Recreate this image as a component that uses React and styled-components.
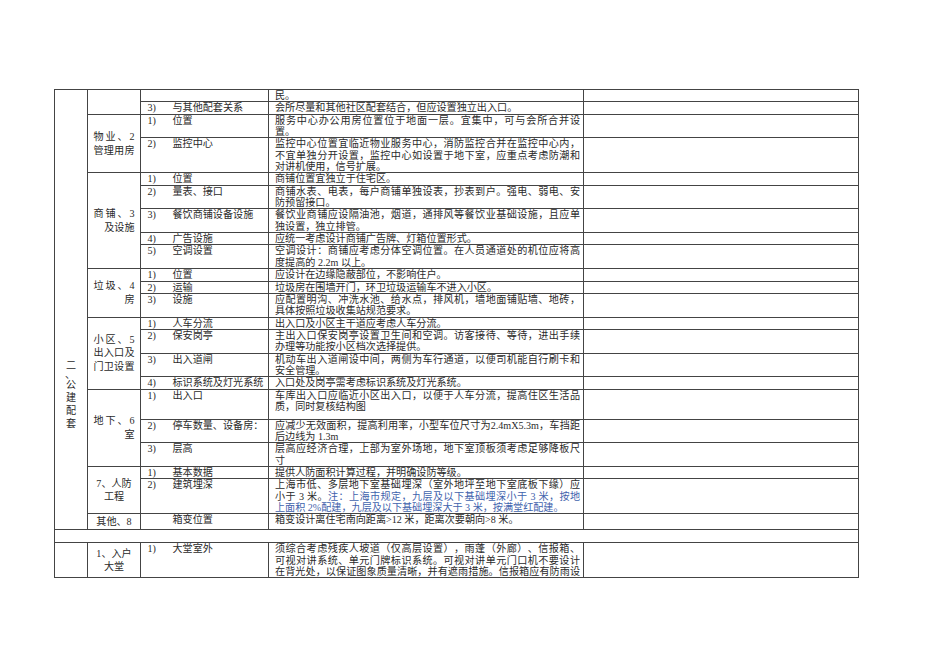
import React from 'react';
import styled, { createGlobalStyle } from 'styled-components';

const GlobalStyle = createGlobalStyle`
  html, body {
    margin: 0;
    padding: 0;
    background: #fff;
  }
  body {
    font-family: "Liberation Serif", "Noto Sans CJK SC", serif;
    color: #2a2a2a;
  }
`;

const Page = styled.div`
  width: 950px;
  height: 672px;
  box-sizing: border-box;
  padding: 89px 0 0 54px;
  overflow: hidden;
`;

const Table = styled.table`
  border-collapse: collapse;
  table-layout: fixed;
  width: 804px;
  font-size: 10.1px;
  line-height: 11.35px;
  text-spacing-trim: space-all;
`;

const Col = styled.col`
  width: ${p => p.$w}px;
`;

const Row = styled.tr`
  height: ${p => (p.$h ? `${p.$h}px` : 'auto')};
`;

const Cell = styled.td`
  border: 1px solid #444;
  padding: 0;
  vertical-align: top;
`;

const SectionCell = styled(Cell)`
  padding-top: 269px;
  text-align: center;
`;

const Glyph = styled.span`
  display: block;
  height: ${p => (p.$short ? 6 : 13)}px;
  line-height: ${p => (p.$short ? 6 : 13)}px;
  text-indent: ${p => (p.$short ? '-2px' : '0')};
`;

const GroupCell = styled(Cell)`
  vertical-align: middle;
  padding: 0 5.5px;
  line-height: 13.5px;
`;

const LabelLine = styled.span`
  display: block;
  white-space: nowrap;
  text-align: ${p => p.$align};
  text-align-last: ${p => p.$align};
`;

const ItemCell = styled(Cell)`
  padding-left: 6.5px;
`;

const Item = styled.div`
  display: flex;
`;

const Num = styled.span`
  width: 25px;
  flex: none;
`;

const Name = styled.span`
  white-space: nowrap;
`;

const TextCell = styled(Cell)`
  padding: 0 3px 0 6px;
`;

const TextLine = styled.span`
  display: block;
  text-align: justify;
  text-align-last: ${p => (p.$full ? 'justify' : 'left')};
`;

const Note = styled.span`
  color: #3f63ad;
`;

const groups = [
  {
    label: [],
    items: [
      { num: '', name: '', text: ['民。'] },
      { num: '3)', name: '与其他配套关系', text: ['会所尽量和其他社区配套结合，但应设置独立出入口。'] },
    ],
  },
  {
    label: [['物业、2', 'justify'], ['管理用房', 'justify']],
    items: [
      { num: '1)', name: '位置', text: ['服务中心办公用房位置位于地面一层。宜集中，可与会所合并设', '置。'] },
      {
        num: '2)',
        name: '监控中心',
        text: [
          '监控中心位置宜临近物业服务中心，消防监控合并在监控中心内，',
          '不宜单独分开设置，监控中心如设置于地下室，应重点考虑防潮和',
          '对讲机使用，信号扩展。',
        ],
      },
    ],
  },
  {
    label: [['商铺、3', 'justify'], ['及设施', 'right']],
    items: [
      { num: '1)', name: '位置', text: ['商铺位置宜独立于住宅区。'] },
      { num: '2)', name: '量表、接口', text: ['商铺水表、电表，每户商铺单独设表，抄表到户。强电、弱电、安', '防预留接口。'] },
      { num: '3)', name: '餐饮商铺设备设施', text: ['餐饮业商铺应设隔油池，烟道，通排风等餐饮业基础设施，且应单', '独设置，独立排管。'] },
      { num: '4)', name: '广告设施', text: ['应统一考虑设计商铺广告牌、灯箱位置形式。'] },
      { num: '5)', name: '空调设置', text: ['空调设计：商铺应考虑分体空调位置。在人员通道处的机位应将高', '度提高的 2.2m 以上。'] },
    ],
  },
  {
    label: [['垃圾、4', 'justify'], ['房', 'right']],
    items: [
      { num: '1)', name: '位置', text: ['应设计在边缘隐蔽部位，不影响住户。'] },
      { num: '2)', name: '运输', text: ['垃圾房在围墙开门，环卫垃圾运输车不进入小区。'] },
      { num: '3)', name: '设施', text: ['应配置明沟、冲洗水池、给水点，排风机，墙地面铺贴墙、地砖，', '具体按照垃圾收集站规范要求。'] },
    ],
  },
  {
    label: [['小区、5', 'justify'], ['出入口及', 'justify'], ['门卫设置', 'justify']],
    items: [
      { num: '1)', name: '人车分流', text: ['出入口及小区主干道应考虑人车分流。'] },
      { num: '2)', name: '保安岗亭', text: ['主出入口保安岗亭设置卫生间和空调。访客接待、等待，进出手续', '办理等功能按小区档次选择提供。'] },
      { num: '3)', name: '出入道闸', text: ['机动车出入道闸设中间，两侧为车行通道，以便司机能自行刷卡和', '安全管理。'] },
      { num: '4)', name: '标识系统及灯光系统', text: ['入口处及岗亭需考虑标识系统及灯光系统。'] },
    ],
  },
  {
    label: [['地下、6', 'justify'], ['室', 'right']],
    items: [
      { num: '1)', name: '出入口', h: 30, text: ['车库出入口应临近小区出入口，以便于人车分流，提高住区生活品', '质，同时复核结构图'] },
      { num: '2)', name: '停车数量、设备房：', text: ['应减少无效面积，提高利用率，小型车位尺寸为2.4mX5.3m，车挡距', '后边线为 1.3m'] },
      { num: '3)', name: '层高', text: ['层高应经济合理，上部为室外场地，地下室顶板须考虑足够降板尺', '寸'] },
    ],
  },
  {
    label: [['7、人防', 'center'], ['工程', 'center']],
    items: [
      { num: '1)', name: '基本数据', text: ['提供人防面积计算过程，并明确设防等级。'] },
      {
        num: '2)',
        name: '建筑埋深',
        text: [
          '上海市低、多层地下室基础埋深（室外地坪至地下室底板下缘）应',
          ['小于 3 米。', { note: '注：上海市规定，九层及以下基础埋深小于 3 米，按地' }],
          [{ note: '上面积 2%配建，九层及以下基础埋深大于 3 米，按满堂红配建。' }],
        ],
      },
    ],
  },
  {
    label: [['其他、8', 'center']],
    items: [
      { num: '', name: '箱变位置', h: 16, text: ['箱变设计离住宅南向距离>12 米，距离次要朝向>8 米。'] },
    ],
  },
];

const totalRows = groups.reduce((n, g) => n + g.items.length, 0);

const renderLine = line => {
  if (typeof line === 'string') return line;
  return line.map((seg, i) =>
    typeof seg === 'string' ? <React.Fragment key={i}>{seg}</React.Fragment> : <Note key={i}>{seg.note}</Note>
  );
};

const TextBlock = ({ lines, allFull }) => (
  <>
    {lines.map((line, i) => (
      <TextLine key={i} $full={allFull || i < lines.length - 1}>
        {renderLine(line)}
      </TextLine>
    ))}
  </>
);

const Label = ({ lines }) => (
  <>
    {lines.map(([t, align], i) => (
      <LabelLine key={i} $align={align}>
        {t}
      </LabelLine>
    ))}
  </>
);

export default function App() {
  return (
    <Page>
      <GlobalStyle />
      <Table>
        <colgroup>
          <Col $w={33} />
          <Col $w={53} />
          <Col $w={128} />
          <Col $w={315} />
          <Col $w={275} />
        </colgroup>
        <tbody>
          {groups.map((g, gi) =>
            g.items.map((it, ii) => (
              <Row key={`${gi}-${ii}`} $h={it.h}>
                {gi === 0 && ii === 0 && (
                  <SectionCell rowSpan={totalRows}>
                    <Glyph>二</Glyph>
                    <Glyph $short>、</Glyph>
                    <Glyph>公</Glyph>
                    <Glyph>建</Glyph>
                    <Glyph>配</Glyph>
                    <Glyph>套</Glyph>
                  </SectionCell>
                )}
                {ii === 0 && (
                  <GroupCell rowSpan={g.items.length}>
                    <Label lines={g.label} />
                  </GroupCell>
                )}
                <ItemCell>
                  <Item>
                    <Num>{it.num}</Num>
                    <Name>{it.name}</Name>
                  </Item>
                </ItemCell>
                <TextCell>
                  <TextBlock lines={it.text} />
                </TextCell>
                <Cell />
              </Row>
            ))
          )}
          <Row $h={13}>
            <Cell colSpan={5} />
          </Row>
          <Row>
            <Cell />
            <GroupCell>
              <Label lines={[['1、入户', 'center'], ['大堂', 'center']]} />
            </GroupCell>
            <ItemCell>
              <Item>
                <Num>1)</Num>
                <Name>大堂室外</Name>
              </Item>
            </ItemCell>
            <TextCell>
              <TextBlock
                allFull
                lines={[
                  '须综合考虑残疾人坡道（仅高层设置），雨蓬（外廊）、信报箱、',
                  '可视对讲系统、单元门牌标识系统。可视对讲单元门口机不要设计',
                  '在背光处，以保证图象质量清晰，并有遮雨措施。信报箱应有防雨设',
                ]}
              />
            </TextCell>
            <Cell />
          </Row>
        </tbody>
      </Table>
    </Page>
  );
}
